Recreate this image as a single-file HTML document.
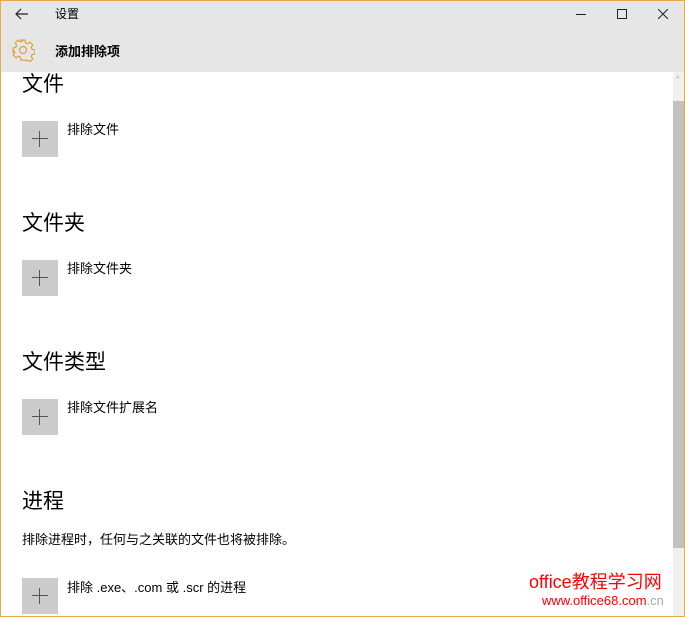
<!DOCTYPE html>
<html><head><meta charset="utf-8"><style>
*{margin:0;padding:0;box-sizing:border-box}
body{width:685px;height:617px;overflow:hidden;position:relative;background:#fff;font-family:"Liberation Sans","Noto Sans CJK SC",sans-serif;color:#000}
.frame{position:absolute;inset:0;border:1px solid #e8a84c;pointer-events:none;z-index:10}
.top{position:absolute;left:0;top:0;width:685px;height:72px;background:#e6e6e6}
.t{position:absolute;font-size:12px}
.h{position:absolute;left:22px;font-size:21px}
.box{position:absolute;left:22px;width:36px;height:36px;background:#ccc}
.box:before{content:"";position:absolute;left:10px;top:17px;width:16px;height:1px;background:#555}
.box:after{content:"";position:absolute;left:17px;top:10px;width:1px;height:16px;background:#555}
.lbl{position:absolute;left:67px;font-size:13px}
</style></head><body>
<div class="top">
<svg style="position:absolute;left:15px;top:8px" width="14" height="12" viewBox="0 0 14 12"><path d="M1 6H13M6 1L1 6L6 11" stroke="#222" stroke-width="1.2" fill="none"/></svg>
<div class="t" style="left:55px;top:5px">设置</div>
<svg style="position:absolute;left:576px;top:14px" width="10" height="2"><rect width="10" height="1" fill="#222"/></svg>
<svg style="position:absolute;left:617px;top:9px" width="10" height="10"><rect x=".5" y=".5" width="9" height="9" stroke="#222" fill="none"/></svg>
<svg style="position:absolute;left:658px;top:9px" width="10" height="10"><path d="M0 0L10 10M10 0L0 10" stroke="#222"/></svg>
<svg style="position:absolute;left:11px;top:38px" width="24" height="24" viewBox="0 0 24 24"><path d="M10 2h4l.6 2.8 2 .9 2.4-1.6 2.8 2.8-1.6 2.4.9 2 2.8.6v4l-2.8.6-.9 2 1.6 2.4-2.8 2.8-2.4-1.6-2 .9L14 22h-4l-.6-2.8-2-.9-2.4 1.6-2.8-2.8 1.6-2.4-.9-2L2 14v-4l2.8-.6.9-2L4.2 5l2.8-2.8 2.4 1.6 2-.9z" fill="none" stroke="#e0a040" stroke-width="1.2"/><circle cx="12" cy="12" r="3.5" fill="none" stroke="#e0a040" stroke-width="1.2"/></svg>
<div class="t" style="left:55px;top:41px;font-weight:bold;font-size:13px">添加排除项</div>
</div>
<div style="position:absolute;left:673px;top:72px;width:11px;height:545px;background:#f0f0f0"></div>
<div style="position:absolute;left:673px;top:101px;width:11px;height:447px;background:#c2c2c2"></div>
<div style="position:absolute;left:676px;top:76px;font-size:7px;color:#999">^</div>
<div class="h" style="top:68px">文件</div>
<div class="box" style="top:121px"></div><div class="lbl" style="top:119px">排除文件</div>
<div class="h" style="top:207px">文件夹</div>
<div class="box" style="top:260px"></div><div class="lbl" style="top:258px">排除文件夹</div>
<div class="h" style="top:346px">文件类型</div>
<div class="box" style="top:399px"></div><div class="lbl" style="top:397px">排除文件扩展名</div>
<div class="h" style="top:485px">进程</div>
<div class="lbl" style="left:22px;top:529px">排除进程时，任何与之关联的文件也将被排除。</div>
<div class="box" style="top:578px"></div><div class="lbl" style="top:577px">排除 .exe、.com 或 .scr 的进程</div>
<div style="position:absolute;left:529px;top:568px;color:#f00;font-size:18px">office教程学习网</div>
<div style="position:absolute;left:542px;top:593px;color:#f00;font-size:13px">www.office68.com<span style="color:#aaa">.cn</span></div>
<div class="frame"></div>
</body></html>
